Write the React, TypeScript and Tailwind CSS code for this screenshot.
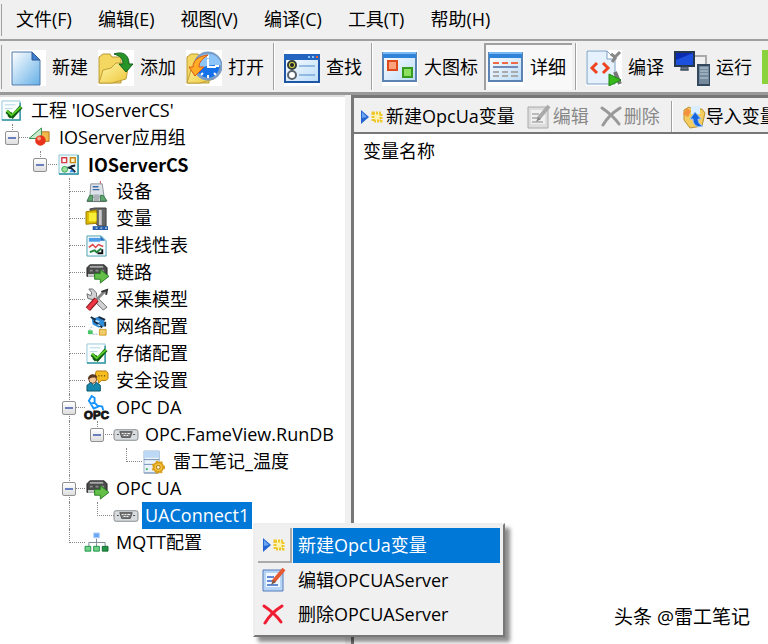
import type { ReactNode } from "react";

type IconName =
  | "project" | "shapes" | "server" | "device" | "zip" | "curve" | "link" | "tools"
  | "network" | "check" | "user" | "opc" | "port" | "tag" | "mqtt";

interface TreeNode {
  label: string;
  icon: IconName;
  // one entry per guide column: " " blank, "|" line, "+" tee, "L" elbow
  guides: string;
  expanded?: boolean;
  bold?: boolean;
  selected?: boolean;
}

const MENUS = ["文件(F)", "编辑(E)", "视图(V)", "编译(C)", "工具(T)", "帮助(H)"];

const TREE: TreeNode[] = [
  { label: "工程 'IOServerCS'", icon: "project", guides: "" },
  { label: "IOServer应用组", icon: "shapes", guides: "L", expanded: true },
  { label: "IOServerCS", icon: "server", guides: " L", expanded: true, bold: true },
  { label: "设备", icon: "device", guides: "  +" },
  { label: "变量", icon: "zip", guides: "  +" },
  { label: "非线性表", icon: "curve", guides: "  +" },
  { label: "链路", icon: "link", guides: "  +" },
  { label: "采集模型", icon: "tools", guides: "  +" },
  { label: "网络配置", icon: "network", guides: "  +" },
  { label: "存储配置", icon: "check", guides: "  +" },
  { label: "安全设置", icon: "user", guides: "  +" },
  { label: "OPC DA", icon: "opc", guides: "  +", expanded: true },
  { label: "OPC.FameView.RunDB", icon: "port", guides: "  |L", expanded: true },
  { label: "雷工笔记_温度", icon: "tag", guides: "  | L" },
  { label: "OPC UA", icon: "link", guides: "  +", expanded: true },
  { label: "UAConnect1", icon: "port", guides: "  |L", selected: true },
  { label: "MQTT配置", icon: "mqtt", guides: "  L" },
];

const TREE_ICONS: Record<IconName, ReactNode> = {
  project: <CheckSheet />,
  check: <CheckSheet />,
  shapes: (
    <>
      <path d="M12 5h9v10h-9z" fill="#f2b84b" stroke="#b3761c" />
      <path d="M0 12 13 1v11z" fill="#c9ecd0" stroke="#2f8a45" />
      <circle cx="12" cy="14" r="5.500" fill="#e8341c" />
      <circle cx="10.500" cy="12" r="2" fill="#ff9d84" />
    </>
  ),
  server: (
    <>
      <path d="M1 1h20v20H1z" fill="#eaf7fb" stroke="#8cc4d0" />
      <path d="M1 21h20V1" fill="none" stroke="#2c93a0" strokeWidth="1.500" />
      <path d="M4 4h5v5H4z" fill="#fff" stroke="#d43a48" strokeWidth="1.500" />
      <path d="M13 4h5v5h-5z" fill="#fff6c8" stroke="#c98713" strokeWidth="1.500" />
      <circle cx="7" cy="16" r="3" fill="#9be0a0" stroke="#31a349" />
      <path d="M11 15c2-2 4-3 7-3M10 14l4 1 4 4" fill="none" stroke="#151f2d" strokeWidth="2" />
      <path d="m12 19 2-3 3 3z" fill="#318ce8" />
    </>
  ),
  device: (
    <>
      <path d="M15 0v4" stroke="#d64646" />
      <path d="M5 3h12l2 14H4z" fill="#dce2e8" stroke="#8a939c" />
      <path d="M7 6h6M7 9h7" stroke="#3a6aa8" strokeWidth="1.500" />
      <path d="M1 21 4 15h3v6zM15 21v-6h3l4 6z" fill="#5fa56e" stroke="#39744a" />
      <path d="M8 14h6v7H8z" fill="#aab2b8" />
      <path d="M1 21.500h20" stroke="#596a65" />
    </>
  ),
  zip: (
    <>
      <path d="M4 1 9 0h12v19h-8L9 15z" fill="#666" stroke="#3d3d3d" />
      <path d="M15 2v16" stroke="#c9c9c9" strokeWidth="3" />
      <path d="M0 4 11 2v14l-11 1z" fill="#dcb800" stroke="#9a7c00" />
      <path d="M3 5h8v9H3z" fill="#f8ef36" />
      <path d="M7 19h16v4H7z" fill="#245ba8" />
      <path d="M10 21h2m3 0h2m3 0h2" stroke="#fff" />
    </>
  ),
  curve: (
    <>
      <path d="M1 1h15l5 5v16H1z" fill="#f3fbff" stroke="#4b9dad" />
      <path d="M3 3h12v4H3z" fill="#4c9ce8" />
      <path d="M15 1v5h5z" fill="#1b6fc0" />
      <path d="m3 13 4-3 3 3 3-3 5 2" fill="none" stroke="#e04444" strokeWidth="1.500" />
      <path d="m4 18 5-2 2 2 5-4" fill="none" stroke="#20853b" strokeWidth="2" />
      <path d="M17 15v4h-5" fill="none" stroke="#111" strokeWidth="2" />
    </>
  ),
  link: (
    <>
      <path d="M1 6 4 3h15l3 3v9H1z" fill="#4a4a4a" stroke="#242424" />
      <path d="M4 5h14" stroke="#aaa" strokeWidth="2" />
      <path d="M4 9h3m3 0h3m3 0h3" stroke="#8c8c8c" strokeWidth="2" />
      <path d="M2 14h7" stroke="#c8c8c8" strokeWidth="3" />
      <path d="M9 12h6V8l9 7-9 7v-4H9z" fill="#63bf47" stroke="#277e23" />
    </>
  ),
  tools: (
    <>
      <path d="M3 0 6 4 5 7 1 5l1 5 5 1 11 11 4-3L11 8V4L7 0z" fill="#d0d2d3" stroke="#6a6c6d" />
      <path d="M20 2 10 12" stroke="#888" strokeWidth="3" />
      <path d="m16 3 6-2-1 5" fill="none" stroke="#333" strokeWidth="2" />
      <path d="M11 11 2 21" stroke="#7b1717" strokeWidth="6" />
      <path d="M11 11 2 21" stroke="#ec3545" strokeWidth="4" />
    </>
  ),
  network: (
    <>
      <path d="M6 3 12 1l7 2v8l-6 1-6-3z" fill="#2f8ad8" />
      <path d="m5 1 5 3m3-3 7 3m-12 1 9 7m3-6v5" stroke="#172c42" strokeWidth="2" />
      <path d="m10 5 4 1m-2 3 3 1" stroke="#bfe8ff" strokeWidth="1.500" />
      <path d="m6 11-3 5m12-3 2 3M7 19h5" stroke="#9eb2c4" strokeDasharray="2 1" />
      <path d="M2 15h5v4H2z" fill="#48c565" />
      <path d="M14 14h7v6h-7z" fill="#f0cd6b" stroke="#d39c25" />
    </>
  ),
  user: (
    <>
      <path d="M11 1h10l2 2v6l-2 2h-5l-3 3v-3l-3-2V3z" fill="#f5bd20" stroke="#b7780f" />
      <path d="M13 6h1m2 0h1m2 0h1" stroke="#6c4800" strokeWidth="1.500" />
      <circle cx="7" cy="10" r="4" fill="#f5c89c" stroke="#5d3b26" />
      <path d="M2 10c0-7 9-7 10-2-4 0-6-1-10 2z" fill="#593620" />
      <path d="M1 22v-6l4-3 3 3 3-3 4 3v6z" fill="#1788ad" stroke="#07566e" />
    </>
  ),
  opc: (
    <>
      <path d="m6-1 3 2v5l-4 1-2-3zM9 6l3 3 5 1 1 4M5 7l3 5 5-2" fill="none" stroke="#1594ff" strokeWidth="2" />
      <text x="-2" y="23" fontFamily="Liberation Sans" fontWeight="bold" fontSize="12" fill="#151515" stroke="#151515">
        OPC
      </text>
    </>
  ),
  port: (
    <>
      <rect x="-1" y="6" width="25" height="11" rx="2" fill="#d9dcde" stroke="#82888c" />
      <path d="M5 8h13l-2 6H7z" fill="#777" stroke="#555" />
      <path d="M7 10h2m1 0h2m1 0h3M9 12h2m1 0h2" stroke="#fff" />
      <path d="M2 11h2m15 0h2" stroke="#444" />
    </>
  ),
  tag: (
    <>
      <path d="M1 0h16v23H1z" fill="#eaf2fb" stroke="#9ab2cb" />
      <path d="M1 0h16v7H1z" fill="#bcd8f4" />
      <path d="M1 9h16M1 14h10M1 23h15" stroke="#7290b0" />
      <path d="M3 18h2v2H3z" fill="#46b65a" />
      <circle cx="16" cy="17" r="5" fill="#f7c541" stroke="#d99d18" strokeWidth="2" />
      <circle cx="16" cy="17" r="6" fill="none" stroke="#d99d18" strokeWidth="2" strokeDasharray="2 3" />
      <circle cx="16" cy="17" r="2" fill="#fff3c6" stroke="#a8760c" />
    </>
  ),
  mqtt: (
    <>
      <path d="M11 7v5M3 16v-5h17v5m-9-4v4" fill="none" stroke="#788891" />
      <path d="M8 1h6v5H8z" fill="#6ba7f4" stroke="#b8d3fa" />
      <path d="M-1 15h6v5h-6zM8 15h6v5H8z" fill="#6fd48a" stroke="#249448" />
      <path d="M17 15h6v5h-6z" fill="#259348" stroke="#136a2d" />
    </>
  ),
};

function CheckSheet() {
  return (
    <>
      <path d="M1 1h19v20H1z" fill="#fbfeff" stroke="#95c6da" />
      <path d="M1 21h19V3" fill="none" stroke="#3295a2" strokeWidth="1.500" />
      <path d="M4 5h11M4 9h8" stroke="#b2d4e2" />
      <path d="m6 12 6 5L21 7M8 18l4-4" fill="none" stroke="#0c5a10" strokeWidth="4" />
      <path d="m6 11 5 5 10-9" fill="none" stroke="#5bce28" strokeWidth="2" />
    </>
  );
}

function Guide({ kind, expander }: { kind: string; expander: boolean }) {
  return (
    <span className="relative flex h-full w-7 shrink-0 flex-col pl-3 even:w-[29px]">
      <span
        className={`h-[14px] border-dotted border-[#888] ${kind !== " " ? "border-l" : ""} ${
          kind === "+" || kind === "L" ? "border-b" : ""
        }`}
      />
      <span className={`flex-1 border-dotted border-[#888] ${kind === "|" || kind === "+" ? "border-l" : ""}`} />
      {expander && (
        <button
          aria-label="折叠"
          className="absolute top-[7px] left-[5px] flex size-[14px] items-center justify-center rounded-[2px] border border-[#919191] bg-linear-to-b from-white to-[#dedede]"
        >
          <span className="h-[2px] w-2 bg-[#6a7fbd]" />
        </button>
      )}
    </span>
  );
}

function TreeRow({ node }: { node: TreeNode }) {
  const guides = node.guides.split("");
  return (
    <li className="flex h-[27px] items-center whitespace-nowrap">
      <span className="flex h-full">
        {guides.map((kind, i) => (
          <Guide key={i} kind={kind} expander={!!node.expanded && i === guides.length - 1} />
        ))}
      </span>
      <svg viewBox="0 0 23 23" className="mx-px size-[22px] shrink-0 overflow-visible">
        {TREE_ICONS[node.icon]}
      </svg>
      <span
        className={`ml-1 px-[3px] leading-[27px] ${
          node.bold ? "font-['Noto_Sans_CJK_SC',sans-serif] font-bold" : ""
        } ${node.selected ? "bg-[#0078d7] text-white" : ""}`}
      >
        {node.label}
      </span>
    </li>
  );
}

interface ToolButtonProps {
  label: string;
  children: ReactNode;
  pressed?: boolean;
  plain?: boolean;
}

function ToolButton({ label, children, pressed, plain }: ToolButtonProps) {
  return (
    <button
      className={`flex h-[47px] shrink-0 items-center gap-[6px] border-t-2 border-l-2 pr-[6px] pl-[2px] ${
        pressed ? "border-[#a0a0a0] bg-[#f8f8f8]" : "border-transparent"
      }`}
    >
      <svg viewBox="0 0 36 36" className={`size-9 ${plain ? "" : "bg-white"}`}>
        {children}
      </svg>
      {label}
    </button>
  );
}

function Separator() {
  return <span className="mr-[5px] ml-[3px] h-[47px] w-[2px] shrink-0 border-r border-white bg-[#a0a0a0]" />;
}

function Toolbar() {
  return (
    <div className="flex h-[54px] items-center overflow-hidden border-b-3 border-[#999] bg-[#f0f0f0] pl-px whitespace-nowrap">
      <span className="mr-1 h-11 w-px shrink-0 bg-[#a0a0a0]" />
      <ToolButton label="新建">
        <defs>
          <linearGradient id="paper" x2="1" y2="1">
            <stop stopColor="#fff" />
            <stop offset="1" stopColor="#65b0e7" />
          </linearGradient>
          <linearGradient id="window" x2="1" y2="1">
            <stop stopColor="#fff" />
            <stop offset="1" stopColor="#bbdcf8" />
          </linearGradient>
          <linearGradient id="folder" x2="1" y2="1">
            <stop stopColor="#fff6a6" />
            <stop offset="1" stopColor="#edc63b" />
          </linearGradient>
        </defs>
        <path d="M2 2h20l8 8v25H2z" fill="url(#paper)" stroke="#5178aa" />
        <path d="M22 2v8h8z" fill="#3c7fd0" stroke="#315990" />
      </ToolButton>
      <ToolButton label="添加">
        <Folder />
        <path d="M16 4c8-3 15 0 15 10h4l-7 8-7-8h4c0-6-3-8-9-10z" fill="#27942a" stroke="#12631a" />
      </ToolButton>
      <ToolButton label="打开">
        <Folder />
        <circle cx="22" cy="16" r="13" fill="#1672ea" stroke="#789cc6" strokeWidth="3" />
        <path d="M9 15c2-15 24-15 26 0-8 0-16-1-24 7z" fill="#8ec5f8" />
        <path d="M22 5v3m0 17v3m7-12h4M22 9v8h8m-15 8 2-2m11 0 2 2" stroke="#fff" strokeWidth="2" fill="none" />
        <path d="M22 5C13 6 7 10 7 17H3l6 9 9-9h-5c0-5 3-8 9-12z" fill="#ffab24" stroke="#db5619" />
      </ToolButton>
      <Separator />
      <ToolButton label="查找">
        <path d="M1 5h34v27H1z" fill="url(#window)" stroke="#1e55a4" strokeWidth="2" />
        <path d="M0 4h36v6H0z" fill="#2466bf" />
        <path d="M24 7h2m2 0h2" stroke="#86c5ff" strokeWidth="2" />
        <path d="M32 7h2" stroke="#f1602e" strokeWidth="2" />
        <circle cx="8" cy="15" r="4" fill="#dfdb54" stroke="#343e36" strokeWidth="2" />
        <circle cx="8" cy="15" r="2" fill="#222" />
        <circle cx="8" cy="25" r="4" fill="#fff" stroke="#59636c" strokeWidth="2" />
        <path d="M15 16h16M15 25h16" stroke="#4e89c9" />
      </ToolButton>
      <Separator />
      <ToolButton label="大图标">
        <WindowFrame />
        <path d="M6 11h9v9H6z" fill="#ffa37c" stroke="#e04a1a" strokeWidth="2" />
        <path d="M21 18h9v9h-9z" fill="#8ce060" stroke="#379b20" strokeWidth="2" />
      </ToolButton>
      <ToolButton label="详细" pressed>
        <WindowFrame />
        <path d="M5 13h6m3 0h6m3 0h7" stroke="#f06a45" strokeWidth="2" />
        <path d="M5 17h25" stroke="#718cb6" strokeWidth="2" />
        <path d="M5 22h6m3 0h6m3 0h7M5 26h6m3 0h6m3 0h7" stroke="#aaa" strokeWidth="2" />
      </ToolButton>
      <Separator />
      <ToolButton label="编译">
        <path d="M1 1h20l8 8v25H1z" fill="#e5f1fc" stroke="#7d9fc2" />
        <path d="M21 1v8h8z" fill="#fff" stroke="#7d9fc2" />
        <path d="m25 4 4 3 5-5M30 7l-4 5" fill="none" stroke="#888" strokeWidth="3" />
        <path d="m11 13-5 5 5 5m6-10 5 5-5 5" fill="none" stroke="#ed4521" strokeWidth="3" />
        <path d="m29 22 5 12" stroke="#777" strokeWidth="4" />
        <path d="m23 24 12 6-12 6z" fill="#37b91b" stroke="#1c8614" />
      </ToolButton>
      <ToolButton label="运行" plain>
        <path d="M0 1h21v16H0z" fill="#25374d" />
        <path d="M2 3h17v12H2z" fill="#0b2bb0" />
        <path d="m2 10 17-7v12H2z" fill="#1d50dc" />
        <path d="M7 17h7v3H7zM6 20h9" fill="#6c7b8a" stroke="#3d4e5e" />
        <path d="M21 6h11v9" fill="none" stroke="#aaa" strokeWidth="2" />
        <path d="M24 15h12v20H24z" fill="#75899d" stroke="#34495d" strokeWidth="2" />
        <path d="M26 18h8m-8 3h8m-8 3h8m-8 4h8" stroke="#c1d1de" />
      </ToolButton>
      <button aria-label="停止" className="ml-1 h-[34px] w-9 shrink-0 bg-[#8bd33c]" />
    </div>
  );
}

function Folder() {
  return (
    <>
      <path d="M1 7 5 4h7l2 3h9v26H1z" fill="#f4d760" stroke="#b79835" />
      <path d="M1 33 5 20l8-2 5-5h13l-3 16-14 4z" fill="url(#folder)" stroke="#c19e36" />
    </>
  );
}

function WindowFrame() {
  return (
    <>
      <path d="M1 3h33v28H1z" fill="url(#window)" stroke="#5b83b3" strokeWidth="2" />
      <path d="M1 2h33v6H1z" fill="#2f83d9" />
      <path d="M1 3h33" stroke="#7bb9f3" strokeWidth="2" />
    </>
  );
}

function NewTagIcon() {
  return (
    <svg viewBox="0 0 24 18" className="h-[18px] w-6 shrink-0">
      <path d="m1 2 8 7-8 7z" fill="#2464d2" />
      <path d="m2 4 5 5-5 1z" fill="#6ba5ef" />
      <path d="M13 5h8v8h-8z" fill="#fff4b1" stroke="#eec72c" strokeWidth="3" strokeDasharray="2 1" />
    </svg>
  );
}

function EditIcon({ disabled }: { disabled?: boolean }) {
  return (
    <svg viewBox="0 0 24 26" className="h-[26px] w-6 shrink-0">
      <path d="M1 3h20v21H1z" fill={disabled ? "#ddd" : "#b9d5f5"} stroke={disabled ? "#aaa" : "#527dbb"} />
      <path d="M4 6h14v14H4z" fill={disabled ? "#f1f1f1" : "#eff7ff"} />
      <path d="M5 10h7m-7 4h6m-6 4h11" stroke={disabled ? "#bbb" : "#6389d4"} strokeWidth="2" />
      <path d="M22 2 11 15" stroke={disabled ? "#aaa" : "#e65a31"} strokeWidth="4" />
      <path d="m11 13-2 5 5-3z" fill={disabled ? "#888" : "#7d5a43"} />
    </svg>
  );
}

function DeleteIcon({ disabled }: { disabled?: boolean }) {
  return (
    <svg viewBox="0 0 22 22" className="size-[22px] shrink-0">
      <path
        d="M2 2c6 4 12 9 17 16M20 2C12 7 7 12 3 19"
        fill="none"
        stroke={disabled ? "#999" : "#f01e32"}
        strokeWidth="3"
        strokeLinecap="round"
      />
    </svg>
  );
}

function ImportIcon() {
  return (
    <svg viewBox="0 0 24 24" className="size-6 shrink-0">
      <path d="m2 5 5-3 3 2h10l3 4-3 13-12 2-6-8z" fill="#f3cd5d" stroke="#b89137" />
      <path d="M9 1h9v8H9z" fill="#d9efff" />
      <path d="m1 9 4-6 4 3-3 6z" fill="#f3913c" />
      <path d="m13 7 6 7h-3c0 4 2 6 5 7-6 2-10-1-10-7H8z" fill="#1764dd" stroke="#94c2ff" />
    </svg>
  );
}

function ContextMenu() {
  return (
    <div
      role="menu"
      className="absolute top-[523px] left-[253px] w-[252px] border-2 border-t-[#eee] border-r-[#777] border-b-[#777] border-l-[#eee] bg-[#f0f0f0] p-[3px] shadow-[5px_5px_4px_rgba(0,0,0,0.45)]"
    >
      <button role="menuitem" className="flex h-[35px] w-full items-center">
        <span className="flex h-full w-[34px] items-center justify-center border-r-2 border-b-2 border-[#aaa]">
          <NewTagIcon />
        </span>
        <span className="ml-px flex h-full flex-1 items-center bg-[#0078d7] pl-[5px] text-white">新建OpcUa变量</span>
      </button>
      <button role="menuitem" className="flex h-[34px] w-full items-center gap-3 pl-1">
        <EditIcon />
        编辑OPCUAServer
      </button>
      <button role="menuitem" className="flex h-[35px] w-full items-center gap-[14px] pl-1">
        <DeleteIcon />
        删除OPCUAServer
      </button>
    </div>
  );
}

export default function App() {
  return (
    <div className="relative flex min-h-screen flex-col overflow-hidden bg-[#f0f0f0] font-['Open_Sans','Noto_Sans_CJK_SC',sans-serif] text-[18px] leading-[27px] text-black">
      <nav className="flex h-[41px] items-center gap-[26px] border-b-2 border-[#a0a0a0] pl-px whitespace-nowrap">
        <span className="-mr-3 h-8 w-px bg-[#a0a0a0]" />
        {MENUS.map((menu) => (
          <button key={menu}>{menu}</button>
        ))}
      </nav>
      <Toolbar />
      <div className="flex flex-1">
        <aside className="w-[345px] shrink-0 border-t-2 border-[#ddd] bg-white">
          <ul>
            {TREE.map((node, i) => (
              <TreeRow key={i} node={node} />
            ))}
          </ul>
        </aside>
        <main className="ml-[6px] flex min-w-0 flex-1 flex-col border-t-3 border-l-3 border-[#777] bg-white">
          <div className="flex h-[36px] items-center overflow-hidden border-b-2 border-[#777] bg-[#f0f0f0] pt-[3px] pl-[6px] whitespace-nowrap">
            <button className="flex shrink-0 items-center gap-[2px]">
              <NewTagIcon />
              新建OpcUa变量
            </button>
            <button disabled className="ml-3 flex shrink-0 items-center gap-[2px] text-[#888]">
              <EditIcon disabled />
              编辑
            </button>
            <button disabled className="ml-[11px] flex shrink-0 items-center gap-[2px] text-[#888]">
              <DeleteIcon disabled />
              删除
            </button>
            <span className="mr-[9px] ml-[11px] h-8 w-[2px] shrink-0 border-r border-white bg-[#a0a0a0]" />
            <button className="flex shrink-0 items-center">
              <ImportIcon />
              导入变量
            </button>
          </div>
          <table className="w-full">
            <thead>
              <tr>
                <th className="px-[9px] py-1 text-left font-normal">变量名称</th>
              </tr>
            </thead>
          </table>
        </main>
      </div>
      <ContextMenu />
      <p className="absolute right-[18px] bottom-[13px] text-[19px]">头条 @雷工笔记</p>
    </div>
  );
}
